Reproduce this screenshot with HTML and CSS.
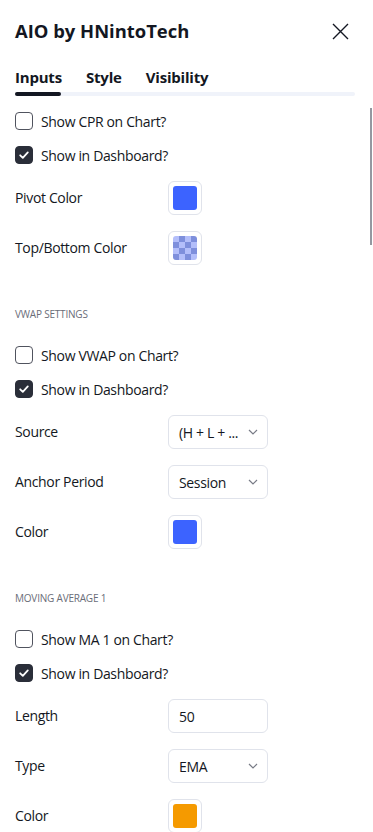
FILE: index.html
```html
<!DOCTYPE html>
<html>
<head>
<meta charset="utf-8">
<link rel="stylesheet" href="styles.css">
</head>
<body>
<div class="dialog">
  <div class="header">
    <div class="title">AIO by HNintoTech</div>
    <button class="close" aria-label="Close">
      <svg width="17" height="17" viewBox="0 0 17 17"><path d="M1 1L16 16M16 1L1 16" stroke="#131722" stroke-width="1.4" fill="none"/></svg>
    </button>
  </div>
  <div class="tabs">
    <div class="tab active">Inputs</div>
    <div class="tab">Style</div>
    <div class="tab">Visibility</div>
  </div>
  <div class="track"><div class="thumb"></div></div>
  <div class="scrollbar"></div>

  <div class="content">
    <div class="check-row"><span class="cb"></span><span>Show CPR on Chart?</span></div>
    <div class="check-row"><span class="cb on"><svg width="18" height="18" viewBox="0 0 18 18"><path d="M5.2 9.3L7.8 11.8L12.8 6.4" stroke="#fff" stroke-width="1.8" fill="none" stroke-linecap="round" stroke-linejoin="round"/></svg></span><span>Show in Dashboard?</span></div>
    <div class="row first"><span class="label">Pivot Color</span><span class="swatch"><span class="fill blue"></span></span></div>
    <div class="row"><span class="label">Top/Bottom Color</span><span class="swatch"><span class="fill checker"></span></span></div>

    <div class="section">VWAP SETTINGS</div>
    <div class="check-row"><span class="cb"></span><span>Show VWAP on Chart?</span></div>
    <div class="check-row"><span class="cb on"><svg width="18" height="18" viewBox="0 0 18 18"><path d="M5.2 9.3L7.8 11.8L12.8 6.4" stroke="#fff" stroke-width="1.8" fill="none" stroke-linecap="round" stroke-linejoin="round"/></svg></span><span>Show in Dashboard?</span></div>
    <div class="row first"><span class="label">Source</span><span class="select"><span class="val">(H + L + ...</span><svg class="chev" width="10" height="6" viewBox="0 0 10 6"><path d="M1 1L5 5L9 1" stroke="#787b86" stroke-width="1.2" fill="none"/></svg></span></div>
    <div class="row"><span class="label">Anchor Period</span><span class="select"><span class="val">Session</span><svg class="chev" width="10" height="6" viewBox="0 0 10 6"><path d="M1 1L5 5L9 1" stroke="#787b86" stroke-width="1.2" fill="none"/></svg></span></div>
    <div class="row"><span class="label">Color</span><span class="swatch"><span class="fill blue"></span></span></div>

    <div class="section">MOVING AVERAGE 1</div>
    <div class="check-row"><span class="cb"></span><span>Show MA 1 on Chart?</span></div>
    <div class="check-row"><span class="cb on"><svg width="18" height="18" viewBox="0 0 18 18"><path d="M5.2 9.3L7.8 11.8L12.8 6.4" stroke="#fff" stroke-width="1.8" fill="none" stroke-linecap="round" stroke-linejoin="round"/></svg></span><span>Show in Dashboard?</span></div>
    <div class="row first"><span class="label">Length</span><span class="input">50</span></div>
    <div class="row"><span class="label">Type</span><span class="select"><span class="val">EMA</span><svg class="chev" width="10" height="6" viewBox="0 0 10 6"><path d="M1 1L5 5L9 1" stroke="#787b86" stroke-width="1.2" fill="none"/></svg></span></div>
    <div class="row"><span class="label">Color</span><span class="swatch"><span class="fill orange"></span></span></div>
  </div>
</div>
</body>
</html>
```

FILE: styles.css
```css
* { box-sizing: border-box; }
html, body { margin: 0; padding: 0; background: #fff; }
body {
  font-family: "Open Sans", "Noto Sans", sans-serif;
  color: #131722;
  width: 373px;
  height: 832px;
  overflow: hidden;
}
.dialog { position: relative; }
.header {
  display: flex;
  justify-content: space-between;
  align-items: flex-start;
  padding: 18px 24px 0 15px;
  height: 62px;
}
.title {
  font-size: 18.4px;
  font-weight: 700;
  line-height: 26px;
  letter-spacing: 0;
}
.close {
  border: 0;
  background: none;
  padding: 0;
  margin-top: 5px;
  width: 17px;
  height: 17px;
  display: flex;
}
.tabs {
  display: flex;
  gap: 24px;
  padding: 3px 15px 0;
  height: 30px;
}
.tab {
  font-size: 15px;
  font-weight: 700;
  line-height: 24px;
  letter-spacing: -0.2px;
}
.track {
  margin: 0 18px 0 15px;
  height: 4px;
  border-radius: 2px;
  background: #f0f3fa;
}
.thumb {
  width: 46px;
  height: 4px;
  border-radius: 2px;
  background: #131722;
}
.scrollbar {
  position: absolute;
  right: 1px;
  top: 108px;
  width: 2px;
  height: 137px;
  background: #9598a1;
}
.content {
  padding: 8px 0 0 15px;
  font-size: 14px;
  letter-spacing: -0.35px;
}
.check-row {
  display: flex;
  align-items: center;
  gap: 8px;
  height: 34px;
}
.cb {
  width: 18px;
  height: 18px;
  border: 1px solid #50535e;
  border-radius: 4px;
  display: flex;
  flex: none;
}
.cb.on {
  background: #2a2e39;
  border-color: #2a2e39;
}
.cb svg { margin: -1px; }
.row {
  display: grid;
  grid-template-columns: 153px auto;
  align-items: center;
  height: 50px;
}
.row.first { margin-top: 1px; }
.label { line-height: 20px; }
.swatch {
  width: 34px;
  height: 34px;
  border: 1px solid #e0e3eb;
  border-radius: 6px;
  padding: 4px;
  display: flex;
}
.fill {
  flex: 1;
  border-radius: 3px;
}
.fill.blue { background: #3c63ff; }
.fill.orange { background: #f59a00; }
.fill.checker {
  background-color: #b3befa;
  background-image:
    linear-gradient(45deg, #7e8fdc 25%, transparent 25%, transparent 75%, #7e8fdc 75%),
    linear-gradient(45deg, #7e8fdc 25%, transparent 25%, transparent 75%, #7e8fdc 75%);
  background-size: 12px 12px;
  background-position: 0 0, 6px 6px;
}
.select, .input {
  width: 100px;
  height: 34px;
  border: 1px solid #e0e3eb;
  border-radius: 6px;
  display: flex;
  align-items: center;
  justify-content: space-between;
  padding: 0 9px 0 10px;
}
.input { padding-left: 10px; }
.val { white-space: nowrap; }
.section {
  height: 65px;
  padding-top: 35px;
  font-size: 10px;
  line-height: 12px;
  color: #6a6d78;
  text-transform: uppercase;
  letter-spacing: -0.2px;
}
```
